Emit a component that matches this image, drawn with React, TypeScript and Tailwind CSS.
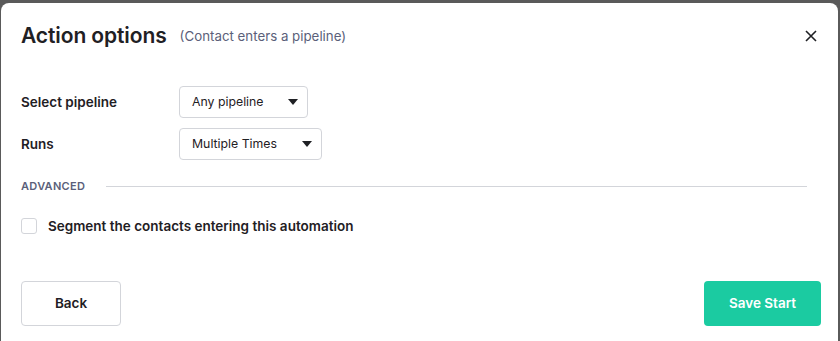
import React from "react";

function Caret() {
  return (
    <svg width="10" height="6" viewBox="0 0 10 6" className="shrink-0">
      <path d="M0 0 L10 0 L5 6 Z" fill="#1f2024" />
    </svg>
  );
}

function Select({ label, width }: { label: string; width: string }) {
  return (
    <div
      className={`flex h-[32px] items-center justify-between rounded-[4px] border border-[#d3d5da] bg-white pl-[12px] pr-[9px] ${width}`}
    >
      <span className="text-[12.3px] text-[#1f2024]">{label}</span>
      <Caret />
    </div>
  );
}

export default function App() {
  return (
    <div
      className="h-[341px] w-[840px] overflow-hidden bg-[#5a5a5a] pl-[1px] pr-[2px] pt-[3px]"
      style={{ fontFamily: "Inter, 'Noto Sans', sans-serif" }}
    >
      <div className="flex h-[345px] flex-col rounded-[8px] bg-white pl-[20px] pr-[17px] text-[#1f2024]">
        <div className="flex h-[64px] items-center pt-[1px]">
          <h1 className="text-[21px] font-semibold tracking-[-0.1px] text-[#1f2024]">Action options</h1>
          <span className="ml-[13px] pt-[3px] text-[13.3px] text-[#5b5f7a]">(Contact enters a pipeline)</span>
          <div className="ml-auto mr-[0px] flex h-[20px] w-[20px] items-center justify-center">
            <svg width="12" height="12" viewBox="0 0 12 12">
              <path d="M1 1 L11 11 M11 1 L1 11" stroke="#1f2024" strokeWidth="1.6" />
            </svg>
          </div>
        </div>
        <div className="mt-[19px] flex flex-col gap-[10px]">
          <div className="flex items-center">
            <span className="w-[158px] text-[13.5px] font-semibold">Select pipeline</span>
            <Select label="Any pipeline" width="w-[129px]" />
          </div>
          <div className="flex items-center">
            <span className="w-[158px] text-[13.5px] font-semibold">Runs</span>
            <Select label="Multiple Times" width="w-[143px]" />
          </div>
        </div>
        <div className="mt-[18px] flex items-center pr-[14px]">
          <span className="text-[11px] font-semibold tracking-[0.3px] text-[#5b5f7a]">ADVANCED</span>
          <div className="ml-[21px] h-px flex-1 bg-[#d3d5da]" />
        </div>
        <div className="mt-[21px] flex items-center">
          <div className="h-[16px] w-[16px] rounded-[3px] border border-[#d3d5da] bg-white" />
          <span className="ml-[11px] text-[13.5px] font-semibold">Segment the contacts entering this automation</span>
        </div>
        <div className="mt-[45px] flex items-center justify-between">
          <button className="flex h-[45px] w-[100px] items-center justify-center rounded-[4px] border border-[#d3d5da] bg-white text-[13.5px] font-semibold text-[#1f2024]">
            Back
          </button>
          <button className="flex h-[45px] w-[117px] items-center justify-center rounded-[4px] bg-[#1bcba1] text-[13.5px] font-semibold text-white">
            Save Start
          </button>
        </div>
      </div>
    </div>
  );
}
